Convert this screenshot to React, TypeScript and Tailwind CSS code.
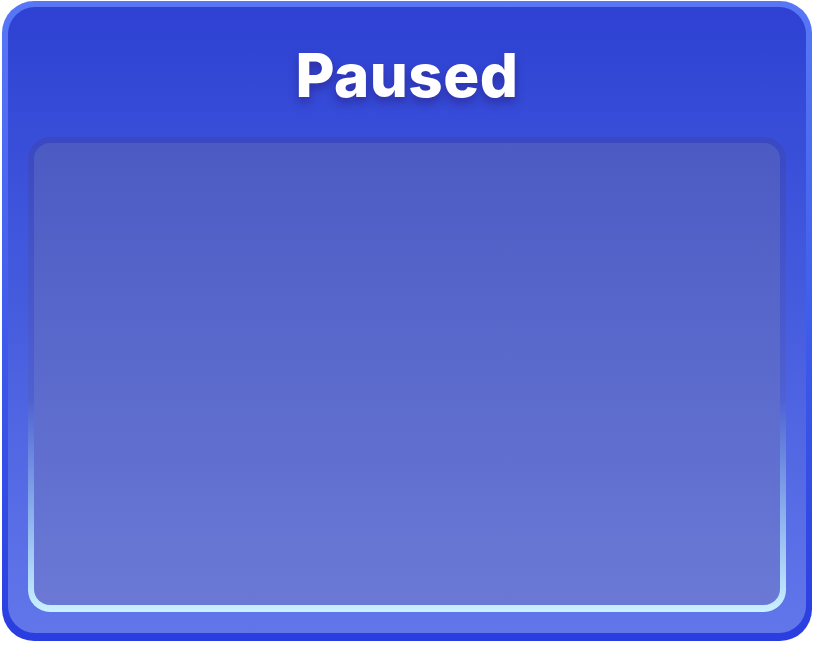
export default function App() {
  return (
    <div className="min-h-screen bg-white pl-[2px] pt-[1px]">
      {/* outer frame: bevelled border made from a gradient wrapper */}
      <div className="h-[640px] w-[810px] rounded-[32px] bg-gradient-to-b from-[#5877f7] to-[#2a3de0] px-[6px] pb-[8px] pt-[6px]">
        <div className="flex h-full flex-col rounded-[27px] bg-gradient-to-b from-[#2e41d3] to-[#6276ea] px-[20px] pb-[21px] pt-[38px]">
          <h1 className="text-center font-['Inter','Noto_Sans',sans-serif] text-[60px] font-extrabold leading-[60px] tracking-[0.5px] text-white [text-shadow:0_5px_10px_rgba(40,25,120,0.55)]">
            Paused
          </h1>

          {/* content well */}
          <div className="mt-[32px] flex-1 rounded-[22px] bg-gradient-to-b from-[#3a49c2] via-[#4f60d2] via-55% to-[#c9f1ff] px-[6px] pb-[7px] pt-[6px]">
            <div className="h-full rounded-[16px] bg-gradient-to-b from-[#4b5bc3] to-[#6b79d5]" />
          </div>
        </div>
      </div>
    </div>
  );
}
